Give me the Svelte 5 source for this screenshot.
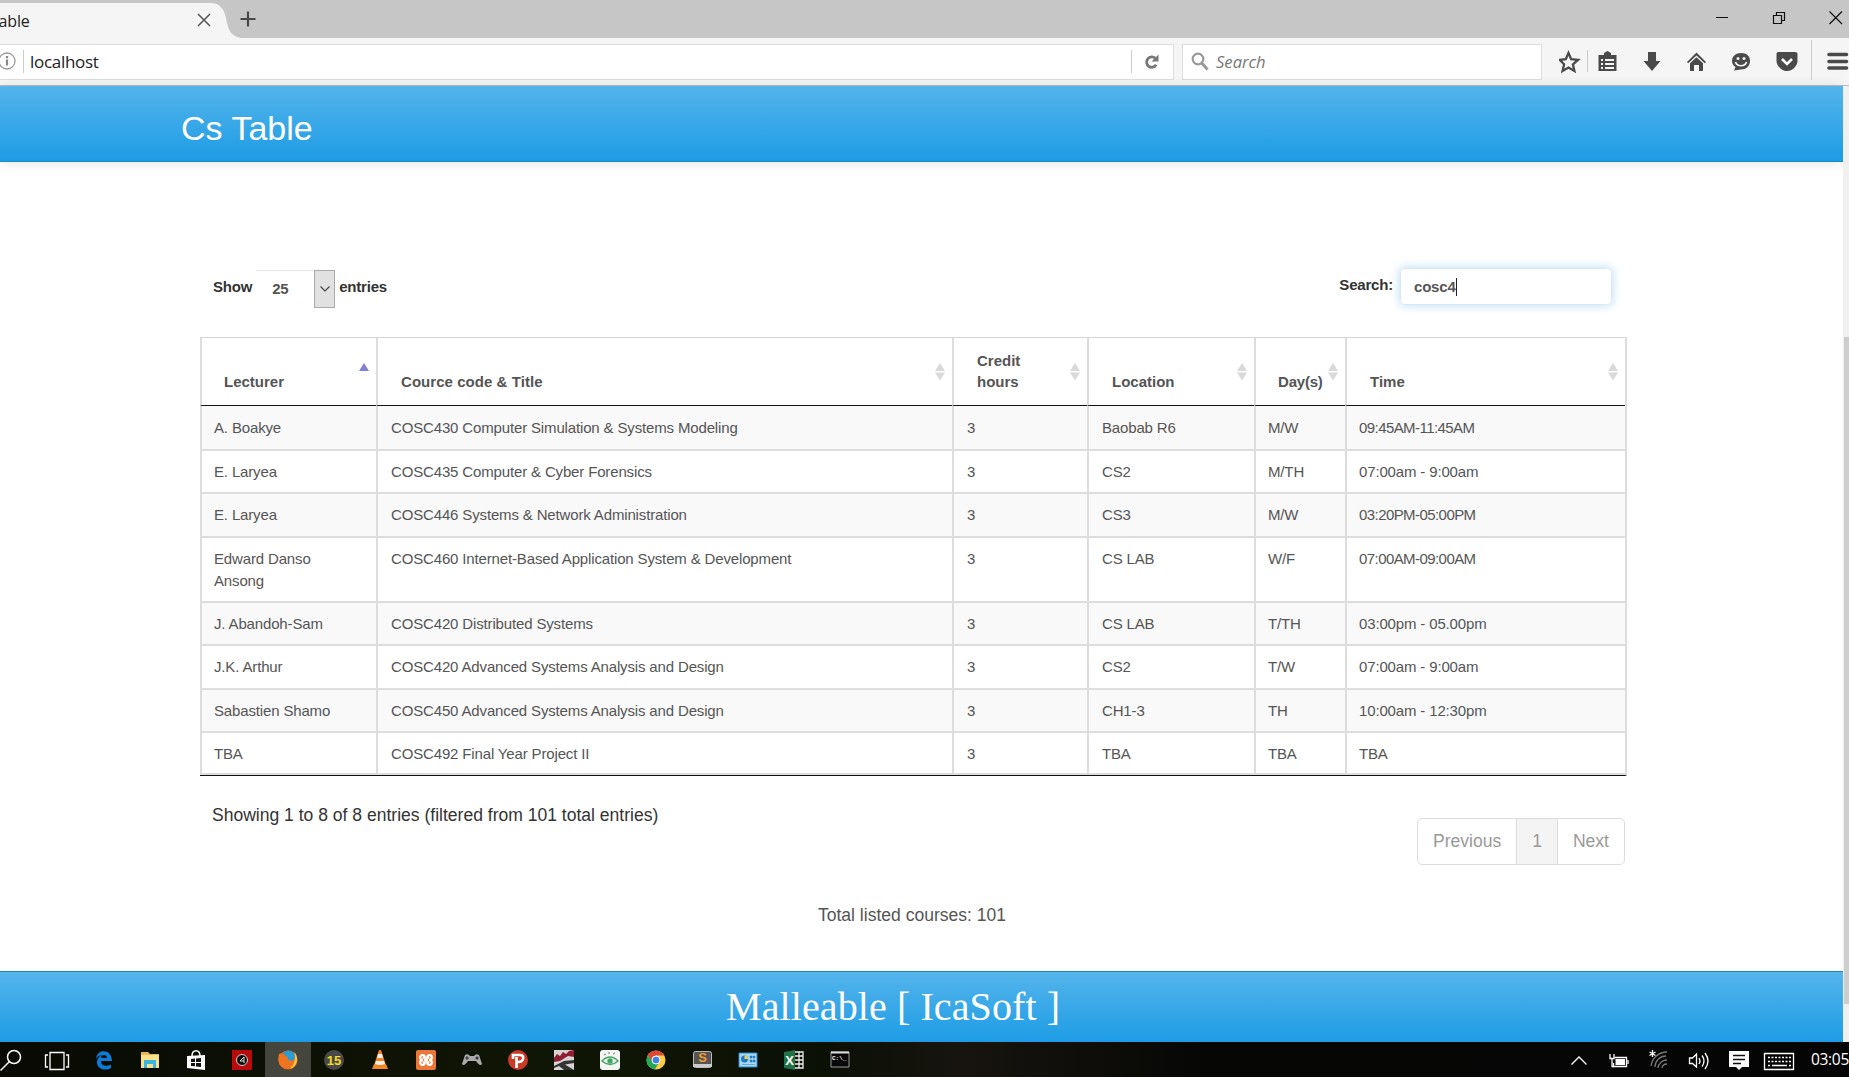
<script>
  const columns = [
    { title: 'Lecturer', cls: 'c1', sorted: true },
    { title: 'Cource code & Title', cls: 'c2' },
    { title: 'Credit hours', cls: 'c3' },
    { title: 'Location', cls: 'c4' },
    { title: 'Day(s)', cls: 'c5' },
    { title: 'Time', cls: 'c6' }
  ];
  const rows = [
    ['A. Boakye', 'COSC430 Computer Simulation & Systems Modeling', '3', 'Baobab R6', 'M/W', '09:45AM-11:45AM'],
    ['E. Laryea', 'COSC435 Computer & Cyber Forensics', '3', 'CS2', 'M/TH', '07:00am - 9:00am'],
    ['E. Laryea', 'COSC446 Systems & Network Administration', '3', 'CS3', 'M/W', '03:20PM-05:00PM'],
    ['Edward Danso Ansong', 'COSC460 Internet-Based Application System & Development', '3', 'CS LAB', 'W/F', '07:00AM-09:00AM'],
    ['J. Abandoh-Sam', 'COSC420 Distributed Systems', '3', 'CS LAB', 'T/TH', '03:00pm - 05.00pm'],
    ['J.K. Arthur', 'COSC420 Advanced Systems Analysis and Design', '3', 'CS2', 'T/W', '07:00am - 9:00am'],
    ['Sabastien Shamo', 'COSC450 Advanced Systems Analysis and Design', '3', 'CH1-3', 'TH', '10:00am - 12:30pm'],
    ['TBA', 'COSC492 Final Year Project II', '3', 'TBA', 'TBA', 'TBA']
  ];
  const apps = ['search', 'tasks', 'edge', 'folder', 'store', 'red', 'firefox', 'fifteen', 'vlc', 'xampp', 'pad', 'psiphon', 'race', 'eye', 'chrome', 'sublime', 'panel', 'excel', 'cmd'];
</script>

<div class="screen">
  <div class="tabs">
    <div class="tab"><span class="tabtitle">Table</span>
      <svg class="curve" width="32" height="35" viewBox="0 0 32 35"><path d="M0 0H1C11 0 15 6 17 15C19 26 21 33 32 35H0Z" fill="#f5f5f5" /></svg>
      <svg class="tabx" width="14" height="14" viewBox="0 0 14 14"><path d="M1 1L13 13M13 1L1 13" stroke="#555" stroke-width="1.5" /></svg>
    </div>
    <svg class="plus" width="16" height="16" viewBox="0 0 16 16"><path d="M8 0.5V15.5M0.5 8H15.5" stroke="#484848" stroke-width="2.2" /></svg>
    <svg class="win" width="130" height="20" viewBox="0 0 130 20" fill="none" stroke="#111" stroke-width="1.2"><path d="M1 9.500H13M58.500 7.500H66.500V15.500H58.500ZM61.500 7V4.500H69.500V12.500H67M114.500 3.500L127 16M127 3.500L114.500 16" /></svg>
  </div>
  <div class="toolbar">
    <div class="url">
      <svg class="info" width="17" height="19" viewBox="0 0 17 19"><circle cx="7" cy="9" r="8" fill="none" stroke="#999" stroke-width="1.3" /><path d="M7 7.500V13.500M7 4V6.200" stroke="#888" stroke-width="2.200" /></svg>
      <i class="sep"></i><span class="host">localhost</span><i class="sep"></i>
      <svg class="reload" width="18" height="18" viewBox="0 0 18 18"><path d="M12.300 5.200A5.200 5.200 0 1 0 13.200 11.800" fill="none" stroke="#777" stroke-width="2.800" /><path d="M15.500 1.500V8.500H8.500Z" fill="#777" /></svg>
    </div>
    <div class="find">
      <svg width="18" height="20" viewBox="0 0 18 20" fill="none" stroke="#999"><circle cx="7" cy="7" r="5.3" stroke-width="2.2" /><path d="M10.7 11L16.5 17.5" stroke-width="3" /></svg>
      <span>Search</span>
    </div>
    <svg class="tools" width="290" height="42" viewBox="1559 40 290 42" fill="#4a4a4a">
      <path d="M1568.500 53L1571.200 59.200L1578 59.800L1572.900 64.300L1574.400 71L1568.500 67.500L1562.600 71L1564.100 64.300L1559.800 59.800L1565.800 59.200Z" fill="none" stroke="#4a4a4a" stroke-width="2.300" />
      <path d="M1587.500 50V72M1811.500 40V80" stroke="#ccc" />
      <path d="M1598.500 55H1604V53L1607.500 51L1611 53V55H1616.500V71H1598.500ZM1601 59V61H1603V59ZM1605 59V61H1614V59ZM1601 63V65H1603V63ZM1605 63V65H1614V63ZM1601 67V69H1603V67ZM1605 67V69H1614V67Z" fill-rule="evenodd" />
      <path d="M1648 52H1656V61H1660.500L1652 71L1643.500 61H1648Z" />
      <path d="M1696.500 52.500L1706 62L1704.800 63.300L1696.500 55.500L1688.200 63.300L1687 62Z" /><path d="M1696.500 57.300L1703 63.300V71H1699V65H1694V71H1690V63.300Z" />
      <path d="M1741 53C1747 53 1750 56.500 1750 61C1750 66 1746 69.500 1741 69.500L1734 70.500L1735.500 67C1733 65.500 1732 63 1732 61C1732 56 1736 53 1741 53Z" /><circle cx="1738" cy="58.500" r="1.500" fill="#f5f5f5" /><circle cx="1744" cy="58.500" r="1.500" fill="#f5f5f5" /><path d="M1735.500 62C1737 67 1745 67 1746.500 62" fill="none" stroke="#f5f5f5" stroke-width="1.700" />
      <path d="M1778 52H1795C1797 52 1797.500 53 1797.500 54V61C1797.500 66 1792 71 1787 71C1782 71 1776.500 66 1776.500 61V54C1776.500 53 1777 52 1778 52Z" /><path d="M1782 59L1787 64L1792 59" fill="none" stroke="#fff" stroke-width="2.600" />
      <path d="M1829 54.500H1846.500M1829 61.500H1846.500M1829 68H1846.500" stroke="#4a4a4a" stroke-width="3.600" stroke-linecap="round" />
    </svg>
  </div>

  <div class="view">
    <div class="page">
      <header>Cs Table</header>
      <main>
        <div class="controls">
          <label class="show">Show <span class="select"><span class="num">25</span><span class="drop"><svg width="10" height="6" viewBox="0 0 10 6"><path d="M.5.5L5 5L9.500.5" fill="none" stroke="#444" stroke-width="1.100" /></svg></span></span> entries</label>
          <label class="search">Search: <span class="box">cosc4<i class="caret"></i></span></label>
        </div>
        <table>
          <thead>
            <tr>
              {#each columns as c}
                <th class={c.cls}>
                  <div class="head"><span>{c.title}</span>
                    <svg class="sort" width="12" height="20" viewBox="0 0 12 20">
                      {#if c.sorted}<path d="M1 9L6 1L11 9Z" fill="#8080d5" />{:else}<path d="M1 9L6 1L11 9ZM1 10.500L6 18.500L11 10.500Z" fill="#d9d9d9" />{/if}
                    </svg>
                  </div>
                </th>
              {/each}
            </tr>
          </thead>
          <tbody>
            {#each rows as r, n}
              <tr class:odd={n % 2 === 0}>
                {#each r as cell}<td class:caps={/\d[AP]M/.test(cell)}>{cell}</td>{/each}
              </tr>
            {/each}
          </tbody>
        </table>
        <div class="below">
          <p class="status">Showing 1 to 8 of 8 entries (filtered from 101 total entries)</p>
          <div class="pager"><span>Previous</span><span class="cur">1</span><span>Next</span></div>
        </div>
        <p class="total">Total listed courses: 101</p>
      </main>
      <footer>Malleable [ IcaSoft ]</footer>
    </div>
    <div class="scroll"><div class="thumb"></div></div>
  </div>

  <div class="taskbar">
    <div class="apps">
      {#each apps as a}
        <div class="app" class:active={a === 'firefox'}>
          <svg width="28" height="24" viewBox="0 0 28 24">
            {#if a === 'search'}<g fill="none" stroke="#fff" stroke-width="1.500"><circle cx="16" cy="9" r="6.500" /><path d="M11.500 13.500L2.500 22.500" /></g>
            {:else if a === 'tasks'}<path d="M6 4.500H20V21.500H6ZM4 7H1.500V19H4M22 7H24.500V19H22" fill="none" stroke="#fff" stroke-width="1.300" />
            {:else if a === 'edge'}<path d="M6 11C7 0 22 1 22 13H11C11 18 17 19 21 16.500V20C14 24 6 20 7 13C8 9 11 7 13 6.500C9 7 7 9 6 11ZM11 10H17C17 6 11 6 11 10Z" fill="#0a7bd6" fill-rule="evenodd" />
            {:else if a === 'folder'}<path d="M5 4H12L14 6H23V20H5Z" fill="#e5b853" /><path d="M5 7H23V20H5Z" fill="#fae08b" /><path d="M8 12H20V20H17V16H11V20H8Z" fill="#3bb4df" />
            {:else if a === 'store'}<path d="M10 8C10 1 18 1 18 8" fill="none" stroke="#fff" stroke-width="1.500" /><path d="M5 8L23 7V22L5 20Z" fill="#fff" /><path d="M9 11L13 10.600V14H9ZM14 10.500L19 10V14H14ZM9 15H13V18.300L9 18ZM14 15H19V19L14 18.400Z" fill="#111" />
            {:else if a === 'red'}<path d="M4 2H24V22H4Z" fill="#b90b0b" /><circle cx="14" cy="12" r="5.500" fill="#111" stroke="#ccc" /><path d="M12 13L16 9V15M12 13H16" stroke="#ddd" fill="none" />
            {:else if a === 'firefox'}<circle cx="14" cy="12" r="9.500" fill="#e96519" /><circle cx="14.500" cy="9" r="6.500" fill="#2a9bd5" /><path d="M5 6C10 4 11 9 14 9C13 13 18 15 22 9C25 20 13 23 8 19C4 16 4 11 5 6Z" fill="#ee7420" /><path d="M20 4C26 10 23 19 16 21C21 16 22 10 20 4Z" fill="#f8c541" />
            {:else if a === 'fifteen'}<circle cx="14" cy="12" r="10" fill="#494949" /><text x="14" y="17" text-anchor="middle" class="i15">15</text>
            {:else if a === 'vlc'}<path d="M8 16H20L22 21H6Z" fill="#f28a20" /><path d="M13 2H15L20 17Q14 21 8 17Z" fill="#ef8420" /><path d="M12 6H16L17 10H11ZM10 13H18L19 16Q14 18 9 16Z" fill="#eee" />
            {:else if a === 'xampp'}<rect x="4" y="2" width="20" height="20" rx="2" fill="#e97838" /><g fill="none" stroke="#fff" stroke-width="2.200"><circle cx="10.500" cy="9.500" r="2.300" /><circle cx="17.500" cy="9.500" r="2.300" /><circle cx="10.500" cy="14.500" r="2.300" /><circle cx="17.500" cy="14.500" r="2.300" /></g><path d="M11 10H17V14H11Z" fill="#e97838" /><path d="M11 9L17 15M17 9L11 15" stroke="#fff" stroke-width="1.800" />
            {:else if a === 'pad'}<path d="M7 7Q10 5 12 8H16Q18 5 21 7L24 16Q22 19 18 13H10Q6 19 4 16Z" fill="#aaa" /><path d="M7 10H11M9 8V12" stroke="#333" /><circle cx="19" cy="10" r="1.500" fill="#333" />
            {:else if a === 'psiphon'}<circle cx="14" cy="12" r="10" fill="#c93a27" /><path d="M12.500 20V9M9 11V7H16Q20 7 19 11Q18 14.500 13 14" fill="none" stroke="#fff" stroke-width="2.600" />
            {:else if a === 'race'}<path d="M4 2H24V22H4Z" fill="#d8d3d3" /><path d="M4 10L7 6L10 8L13 4L16 6L19 3L24 2V9L18 8L10 13L4 14Z" fill="#8e1e32" /><path d="M4 18L14 13L24 12V15L15 16.500L24 22H14L9 18L4 20Z" fill="#333" />
            {:else if a === 'eye'}<rect x="4" y="2" width="20" height="20" rx="3" fill="#f2f5f2" /><path d="M6 13Q14 5 22 13Q14 20 6 13Z" fill="none" stroke="#42a565" stroke-width="1.500" /><circle cx="14" cy="13" r="2.700" fill="#42a565" /><path d="M8 7L10 6M13 6V4M17 6L19 5" stroke="#777" />
            {:else if a === 'chrome'}<circle cx="14" cy="12" r="9.500" fill="#fc4" /><path d="M5.800 7.200A9.500 9.500 0 0 0 13 21.500L17 14H11Z" fill="#24a65b" /><path d="M5.800 7.200A9.500 9.500 0 0 1 22.200 7.500H14L10 13Z" fill="#df4735" /><circle cx="14" cy="12" r="4" fill="#3f84e6" stroke="#fff" />
            {:else if a === 'sublime'}<rect x="5.500" y="3.500" width="18" height="16" rx="2" fill="#555" stroke="#bbb" /><path d="M5 16H24V19H5Z" fill="#ccc" /><text x="14.500" y="14" text-anchor="middle" class="sub">S</text>
            {:else if a === 'panel'}<path d="M5 5H23V19H5Z" fill="#a6d8f5" stroke="#2a88ca" /><circle cx="10.500" cy="11" r="3.500" fill="#1c78c8" /><path d="M10.500 11V7.500A3.500 3.500 0 0 1 14 11Z" fill="#fbd13c" /><path d="M16 8H18V10H16ZM19 8H21V10H19ZM16 12H18V14H16ZM19 12H21V14H19ZM8 16.500H21" fill="#247bbf" stroke="#247bbf" stroke-width=".5" />
            {:else if a === 'excel'}<path d="M15 4H23V20H15M15 8H23M15 12H23M15 16H23M19 4V20" fill="none" stroke="#eee" stroke-width="1.300" /><path d="M4 4L15 2V22L4 20Z" fill="#207346" /><text x="9.500" y="16.500" text-anchor="middle" class="xl">X</text>
            {:else}<path d="M5 4H23V19H5Z" fill="#080808" stroke="#999" /><path d="M5 4.500H23" stroke="#ddd" stroke-width="2" /><text x="6" y="11.500" class="cm">C:\_</text>{/if}
          </svg>
        </div>
      {/each}
    </div>
    <svg class="tray" width="265" height="35" viewBox="1565 1042 265 35" fill="none" stroke="#fff" stroke-width="1.300">
      <path d="M1570.500 1064.500L1578 1057L1585.500 1064.500" />
      <path d="M1613.500 1057.500H1625.500V1066.500H1612.500V1063" /><path d="M1614.500 1059H1624V1065H1614.500Z" fill="#fff" stroke="none" /><path d="M1627 1060V1064M1609 1054V1058.500H1613V1054M1611 1058V1066.500H1613" />
      <g stroke="#777"><path d="M1654 1067A11 11 0 0 1 1665 1056M1657 1068A9 9 0 0 1 1666 1060M1650 1066A16 16 0 0 1 1666 1052M1661 1068A5 5 0 0 1 1666 1064" /></g><path d="M1651.500 1050V1057M1648.500 1052L1654.500 1055.500M1654.500 1052L1648.500 1055.500" />
      <path d="M1688.500 1058H1691.500L1695.500 1054V1067L1691.500 1063.500H1688.500ZM1698 1058Q1700 1061 1698 1064M1701 1055.500Q1705 1061 1701 1066.500M1704 1053Q1710 1061 1704 1069" />
      <path d="M1728 1051H1748V1067H1741L1738 1070L1735 1067H1728Z" fill="#fff" stroke="none" /><path d="M1732 1055.500H1744M1732 1059.500H1744M1732 1063.500H1740" stroke="#111" />
      <path d="M1763.500 1053.500H1792.500V1069.500H1763.500Z" /><path d="M1767 1057.500H1790M1767 1061.500H1790" stroke-dasharray="2 1.500" /><path d="M1767 1065.500H1769M1771 1065.500H1786M1788 1065.500H1790" />
    </svg>
    <span class="clock">03:05</span>
  </div>
</div>

<style>
  :global(body) { margin: 0; overflow: hidden; }
  * { box-sizing: border-box; }
  .screen { width: 1849px; height: 1077px; display: flex; flex-direction: column; overflow: hidden; font-family: "Liberation Sans", Arial, sans-serif; background: #fff; }
  .screen svg { flex: none; display: block; }
  .tabs { height: 38px; background: #c6c6c6; display: flex; align-items: center; flex: none; }
  .tab { width: 211px; height: 35px; margin-top: 3px; background: #f5f5f5; display: flex; align-items: center; position: relative; font: 16px "Open Sans", sans-serif; letter-spacing: -.2px; color: #222; }
  .tabtitle { margin: 0 0 0 -10px; width: 208px; }
  .tabx { margin-top: -1px; position: relative; }
  .curve { position: absolute; left: 209px; top: 0; }
  .plus { margin-left: 29px; }
  .win { margin-left: auto; margin-right: 4px; margin-top: -2px; }
  .toolbar { height: 48px; flex: none; background: #f5f5f5; border-bottom: 1px solid #bbb; display: flex; align-items: center; }
  .url { width: 1174px; height: 36px; border: 1px solid #ddd; border-left: 0; background: #fff; display: flex; align-items: center; }
  .info { margin-left: 0; margin-right: 6px; }
  .sep { width: 1px; height: 23px; background: #ccc; }
  .host { flex: 1; font: 17px "Open Sans", sans-serif; letter-spacing: -.3px; color: #222; padding-left: 6px; margin-top: -1px; }
  .reload { margin: 0 12px 0 11px; }
  .find { margin-left: 8px; width: 360px; height: 36px; border: 1px solid #ddd; background: #fff; display: flex; align-items: center; padding-left: 8px; font: italic 16.600px "Open Sans", sans-serif; color: #777; gap: 7px; }
  .tools { margin-left: 17px; margin-top: -1px; }
  .view { height: 956px; flex: none; display: flex; }
  .page { width: 1843px; display: flex; flex-direction: column; }
  header { height: 76px; background: linear-gradient(#54b4eb, #1d9ce5); border-bottom: 1px solid #178acc; box-shadow: 0 1px 12px #0000001a; color: #fff; font-size: 34px; line-height: 85px; padding-left: 181px; flex: none; }
  main { flex: 1; padding: 104px 0 0 200px; color: #555; }
  .controls { width: 1426px; height: 71px; display: flex; justify-content: space-between; font-size: 15px; font-weight: bold; color: #333; padding: 0 15px 0 13px; }
  .show, .search { display: flex; letter-spacing: -.2px; }
  .show { margin-top: 3px; height: 38px; line-height: 36px; align-items: flex-start; gap: 4px; }
  .select { display: flex; width: 79px; height: 38px; border-top: 1px solid #e9e9e9; color: #555; margin-top: 1px; }
  .num { flex: 1; padding-left: 16px; line-height: 35px; }
  .drop { width: 21px; margin-top: -1px; background: #e1e1e1; border: 1px solid #aaa; display: grid; place-items: center; }
  .search { margin-top: 3px; height: 35px; gap: 8px; line-height: 32px; }
  .box { width: 210px; height: 35px; border-radius: 3px; box-shadow: 0 0 10px 2px #c3dff2, 0 0 1px #ccc; color: #555; padding: 1px 0 0 13px; line-height: 34px; display: flex; align-items: center; }
  .caret { width: 1px; height: 18px; background: #222; }
  table { width: 1427px; table-layout: fixed; border-spacing: 0; border-right: 2px solid #ddd; border-bottom: 1px solid #111; font-size: 15px; line-height: 22px; }
  th { height: 69px; border-left: 2px solid #ddd; border-top: 1px solid #d5d5d5; border-bottom: 1px solid #111; padding: 0 0 13px 23px; text-align: left; vertical-align: bottom; line-height: 21px; }
  .c1 { width: 176px; padding-left: 22px; } .c2 { width: 576px; } .c3 { width: 135px; } .c4 { width: 167px; } .c5 { width: 91px; padding-left: 22px; }
  .head { display: flex; justify-content: space-between; align-items: flex-end; }
  .c2 span { letter-spacing: .05px; }
  .c3 span { width: 60px; }
  .c5 span { letter-spacing: -.2px; }
  .sort { margin: 0 6px 10px 0; }
  td { height: 43px; border-left: 2px solid #ddd; border-bottom: 2px solid #ddd; padding: 10px 12px 9px; vertical-align: top; letter-spacing: -.15px; }
  td:first-child { padding-right: 24px; }
  td:nth-child(2), td:nth-child(3), td:nth-child(4) { padding-left: 13px; }
  .caps { letter-spacing: -.57px; }
  tr:nth-child(3) td, tr:nth-child(6) td { height: 44px; }
  tbody tr:first-child td { height: 45px; padding-top: 11px; }
  tbody tr:last-child td { height: 42px; padding-bottom: 8px; }
  .odd td { background: #f9f9f9; }
  .below { width: 1425px; display: flex; justify-content: space-between; align-items: flex-start; }
  p { margin: 0; }
  .status { margin: 28px 0 0 12px; font-size: 17.550px; line-height: 22px; color: #333; }
  .pager { margin-top: 42px; height: 47px; display: flex; border: 1px solid #ddd; border-radius: 5px; color: #999; font-size: 17.550px; line-height: 45px; }
  .pager span { padding: 0 15px; }
  .pager .cur { background: #f4f4f4; border: solid #ddd; border-width: 0 1px; }
  .total { text-align: center; width: 1424px; margin-top: 39px; font-size: 17.550px; line-height: 22px; }
  footer { height: 71px; flex: none; border-top: 1px solid #2583b5; background: linear-gradient(#54b4eb, #1d9ce5); color: #fff; font: 40px/70px "Liberation Serif", serif; letter-spacing: .1px; padding-left: 726px; }
  .scroll { width: 6px; background: #f0f0f0; padding: 251px 0 0 1px; }
  .thumb { height: 667px; background: #cdcdcd; }
  .taskbar { height: 35px; flex: none; background: linear-gradient(90deg, #080a03, #101605 30%, #0b1005 45%, #17140f 52%, #060705 65%, #050505); display: flex; align-items: center; }
  .apps { display: flex; width: 1564px; margin-left: -11px; }
  .app { width: 46px; height: 35px; display: grid; place-items: center; flex: none; }
  .active { background: #44463d; }
  .tray { margin-left: 13px; }
  .clock { color: #fff; font: 15.500px "Open Sans", sans-serif; letter-spacing: -.3px; margin: -2px 0 0 -20px; }
  .i15 { font: bold 13px "Liberation Sans"; fill: #f2da27; }
  .sub { font: bold 13px "Liberation Sans"; fill: #f49b31; }
  .xl { font: bold 13px "Liberation Sans"; fill: #fff; }
  .cm { font: bold 6px "Liberation Mono"; fill: #fff; }
</style>
